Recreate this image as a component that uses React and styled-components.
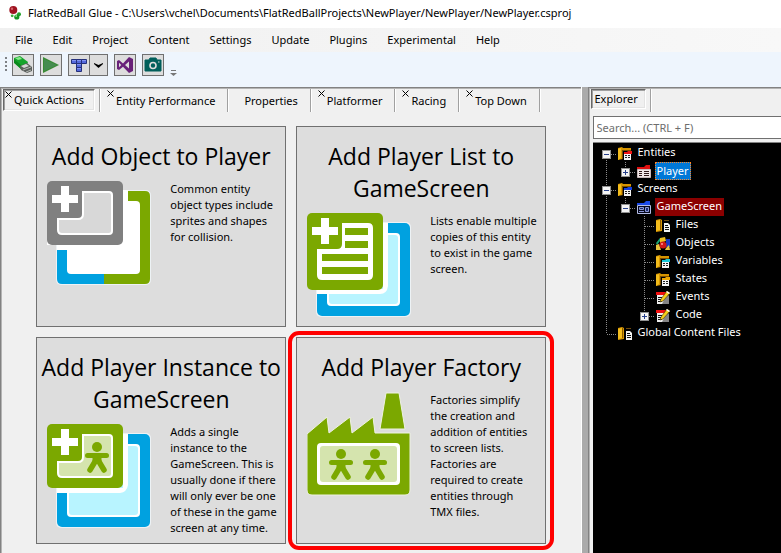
import React from "react";
import styled, { createGlobalStyle, css } from "styled-components";

const GlobalStyle = createGlobalStyle`
  * { box-sizing: border-box; }
  html, body, #root { height: 100%; }
  body {
    margin: 0;
    overflow: hidden;
    background: #f0f0f0;
    color: #000;
    font: 11px/16px "Noto Sans", "Open Sans", sans-serif;
  }
  button, input { font: inherit; color: inherit; }
`;

const Window = styled.div`
  display: flex;
  flex-direction: column;
  min-height: 100vh;
`;

const TitleBar = styled.header`
  display: flex;
  align-items: center;
  gap: 6px;
  height: 28px;
  padding: 0 8px 2px;
  background: #fff;
  white-space: nowrap;
`;

const WindowTitle = styled.h1`
  margin: 0;
  font-size: 11px;
  font-weight: 400;
`;

const MenuBar = styled.nav`
  display: flex;
  height: 24px;
  padding-left: 5px;
  background: linear-gradient(90deg, #f0f0f0, #f8f8f8);
`;

const MenuItem = styled.button`
  padding: 0 10px;
  border: 0;
  background: none;
`;

const ToolBar = styled.div`
  display: flex;
  align-items: flex-start;
  gap: 6px;
  height: 35px;
  padding: 2px 5px;
  background: #eef5fd;
`;

const Grip = styled.span`
  width: 2px;
  height: 14px;
  margin: 3px -1px 0 0;
  background: repeating-linear-gradient(#7d8085 0 2px, transparent 2px 4px);
`;

const ToolGroup = styled.div`
  display: flex;
`;

const ToolButton = styled.button`
  display: flex;
  align-items: center;
  justify-content: center;
  width: ${(p) => (p.$narrow ? 18 : 22)}px;
  height: 22px;
  padding: 0;
  border: 1px solid #707070;
  border-left-width: ${(p) => (p.$narrow ? 0 : 1)}px;
  background: #ddd;
`;

const Overflow = styled.button`
  height: 22px;
  padding: 0;
  border: 0;
  background: none;
  display: flex;
  align-items: flex-end;
`;

const Workspace = styled.div`
  flex: 1;
  display: grid;
  grid-template-columns: minmax(0, 3fr) 7px minmax(0, 1fr);
`;

const Panel = styled.section`
  display: flex;
  flex-direction: column;
  border-top: 1px solid #828282;
  border-left: 1px solid #828282;
  box-shadow: inset 1px 1px 0 #b4b4b4;
  padding: 1px 0 0 1px;
`;

const Splitter = styled.div`
  background: #ababab;
  border-left: 1px solid #fff;
`;

const TabStrip = styled.div`
  display: flex;
  height: 23px;
  padding-left: 1px;
`;

const Tab = styled.button`
  position: relative;
  padding: 0 12px 0 16px;
  border: 0;
  border-right: 1px solid #a0a0a0;
  box-shadow: 1px 0 0 #fff;
  background: none;
  white-space: nowrap;

  ${(p) =>
    p.$selected &&
    css`
      height: 22px;
      margin-right: 4px;
      padding: 0 10px 0 10px;
      border: 1px solid;
      border-color: #696969 #fff #fff #696969;
      box-shadow: inset 1px 1px 0 #a0a0a0, inset -1px -1px 0 #e3e3e3;
    `}
  ${(p) =>
    p.$compact &&
    css`
      height: 20px;
      padding: 0 7px 0 3px;
    `}
`;

const TabEdge = styled.span`
  width: 1px;
  background: #a0a0a0;
  box-shadow: 1px 0 0 #fff;
`;

const CloseMark = styled.svg`
  position: absolute;
  top: 1px;
  left: ${(p) => (p.$selected ? 1 : 7)}px;
`;

const Cards = styled.main`
  display: grid;
  grid-template-columns: repeat(auto-fill, 250px);
  justify-content: center;
  gap: 10px;
  padding: 14px 0 9px;
`;

const Card = styled.button`
  position: relative;
  display: flex;
  flex-direction: column;
  justify-content: flex-start;
  padding: 13px 4px 7px;
  border: 1px solid #707070;
  background: #ddd;
`;

const CardTitle = styled.span`
  display: block;
  align-self: stretch;
  font-family: "Open Sans", "Noto Sans", sans-serif;
  font-size: 23px;
  line-height: 32px;
  text-align: center;
`;

const CardBody = styled.span`
  display: flex;
  gap: 19px;
  padding: 9px 0 0 4px;
  text-align: left;
`;

const CardText = styled.span`
  flex: 1;
  white-space: pre-line;
`;

const CardIcon = styled.svg`
  flex: none;
  margin: 0 0 2px 2px;
`;

const Highlight = styled.span`
  position: absolute;
  inset: -7px -9px -7px -9px;
  border: 4px solid #f00;
  border-radius: 11px;
  pointer-events: none;
`;

const Search = styled.input`
  height: 23px;
  margin: 4px 0 3px 3px;
  padding: 0 3px;
  border: 1px solid #707070;
  border-right: 0;
  border-radius: 0;
  background: #fff;
  min-width: 0;
  &::placeholder { color: #6d6d6d; opacity: 1; }
`;

const Tree = styled.ul`
  flex: 1;
  list-style: none;
  margin: 0 0 0 3px;
  padding: 1px 0 0 4px;
  border-top: 1px solid #828282;
  background: #000;
  color: #fff;
`;

const TreeRow = styled.li`
  display: flex;
  align-items: center;
  height: 18px;
  white-space: nowrap;
`;

const vDots = "repeating-linear-gradient(#8a8a8a 0 1px, transparent 1px 2px)";
const hDots = "repeating-linear-gradient(90deg, #8a8a8a 0 1px, transparent 1px 2px)";
const guides = {
  blank: "none",
  line: `${vDots} 9px 0 / 1px 18px no-repeat`,
  tee: `${vDots} 9px 0 / 1px 18px no-repeat, ${hDots} 10px 10px / 9px 1px no-repeat`,
  end: `${vDots} 9px 0 / 1px 10px no-repeat, ${hDots} 10px 10px / 9px 1px no-repeat`,
  first: `${vDots} 9px 10px / 1px 8px no-repeat, ${hDots} 10px 10px / 9px 1px no-repeat`,
};

const Guide = styled.span`
  display: flex;
  align-items: center;
  justify-content: center;
  flex: none;
  width: 19px;
  height: 18px;
  padding-top: 2px;
  background: ${(p) => guides[p.$kind]};
`;

const Toggle = styled.button`
  display: flex;
  width: 9px;
  height: 9px;
  padding: 0;
  border: 1px solid #919191;
  background: #f4f4f4;
`;

const NodeIcon = styled.svg`
  flex: none;
  margin: 2px 3px 0 1px;
`;

const NodeLabel = styled.span`
  height: 18px;
  padding: 0 2px;
  border: 0 solid;
  ${(p) =>
    p.$tone === "selected" &&
    css`
      padding: 0 1px;
      line-height: 16px;
      border: 1px dotted #ff8728;
      background: #0078d7;
    `}
  ${(p) => p.$tone === "startup" && css`background: #8b0000;`}
`;

/* ---------- drawings ---------- */

const AppIcon = () => (
  <svg width="14" height="14" viewBox="0 0 14 14" aria-hidden="true">
    <circle cx="5.3" cy="4" r="4" fill="#9e1420" />
    <circle cx="4" cy="2.8" r="1.2" fill="#d4626a" />
    <circle cx="11" cy="8.2" r="2" fill="#22a22c" />
    <circle cx="4.2" cy="9.8" r="1.4" fill="#3aae3a" />
    <circle cx="8.8" cy="11" r="2.6" fill="#159422" />
    <circle cx="8.2" cy="10" r="0.9" fill="#8fe08a" />
  </svg>
);

const GlueIcon = () => (
  <svg width="20" height="20" viewBox="0 0 20 20" aria-hidden="true">
    <path d="M1 3 7 1 15 7 13 12 8 14 1 7Z" fill="#16a52c" />
    <path d="M2 3 7 2 9 4 5 5Z" fill="#8aec8c" />
    <path d="M1 4 8 10 8 14 1 8Z" fill="#0a8a1c" />
    <path d="M7 11 14 8 19 12 19 16 14 18 8 15Z" fill="#5c605d" />
    <path d="M8 11 13 9 16 11 11 13Z" fill="#d5d8d5" />
    <path d="M10 15 18 12M13 17 18 15" stroke="#b4b8b4" />
  </svg>
);

const PlayIcon = () => (
  <svg width="20" height="20" viewBox="0 0 20 20" aria-hidden="true">
    <path d="M2 2 18 10 2 18Z" fill="#388a34" />
    <path d="M3 4 16 10 3 16Z" fill="#458c50" />
  </svg>
);

const TileIcon = () => (
  <svg width="18" height="18" viewBox="0 0 18 18" aria-hidden="true">
    <g fill="#5468dc" stroke="#25307a">
      <path d="M1.500 3.500h5v4h-5zM6.500 3.500h5v4h-5zM11.500 3.500h5v4h-5zM6.500 7.500h5v4h-5zM6.500 11.500h5v4h-5z" />
    </g>
    <path d="M2 4.500h4M7 4.500h4M12 4.500h4M7 8.500h4M7 12.500h4" stroke="#8494f0" />
  </svg>
);

const ArrowIcon = () => (
  <svg width="9" height="5" viewBox="0 0 9 5" aria-hidden="true">
    <path d="M0 0 4.500 2 9 0V1L4.500 5 0 1Z" fill="#000" />
  </svg>
);

const VisualStudioIcon = () => (
  <svg width="18" height="18" viewBox="0 0 18 18" aria-hidden="true">
    <path
      fillRule="evenodd"
      fill="#68217a"
      d="M1 5 3 4 7 7.400 13 1 17 3V15L13 17 7 10.800 3 14 1 13ZM3 6.800V11.200L5.300 9ZM13 5.500 9 9 13 12.600Z"
    />
  </svg>
);

const CameraIcon = () => (
  <svg width="18" height="18" viewBox="0 0 18 18" aria-hidden="true">
    <path d="M1 4H5L6 2H12L13 4H17V15H1Z" fill="#005f5b" stroke="#005f5b" strokeLinejoin="round" />
    <circle cx="9" cy="9.500" r="3" fill="none" stroke="#ddd" strokeWidth="1.600" />
    <path d="M14 6h1.500" stroke="#ddd" />
  </svg>
);

const OverflowIcon = () => (
  <svg width="7" height="6" viewBox="0 0 7 6" aria-hidden="true">
    <path d="M1 .5H6" stroke="#777" />
    <path d="M0 3H7L3.500 6Z" fill="#777" />
  </svg>
);

const Person = ({ x, y }) => (
  <g transform={`translate(${x} ${y})`} stroke="#7ba800" strokeLinecap="round" fill="none">
    <circle cx="12" cy="5" r="5" fill="#7ba800" stroke="none" />
    <path d="M2.500 13.500H21.500" strokeWidth="5" />
    <path d="M12 12V19" strokeWidth="9" strokeLinecap="butt" />
    <path d="M11 18 5 28M13 18 19 28" strokeWidth="5.500" />
  </g>
);

const Plus = () => <path d="M14 5H22V14H31V22H22V31H14V22H5V14H14Z" fill="#fff" />;

const BackSheet = () => (
  <>
    <rect x="9" y="9" width="95" height="95" rx="5" fill="#edf2f5" />
    <rect x="10" y="10" width="93" height="93" rx="5" fill="#00a1e0" />
    <rect x="20" y="20" width="73" height="73" rx="4" fill="#fff" />
    <rect x="22" y="22" width="69" height="69" rx="3" fill="#b8f4ff" />
  </>
);

const iconArt = {
  object: (
    <>
      <rect x="9" y="9" width="95" height="95" rx="5" fill="#edf2f5" />
      <path d="M57 10H98Q103 10 103 15V98Q103 103 98 103H57Z" fill="#7ba800" />
      <path d="M57 103H15Q10 103 10 98V10H57Z" fill="#00a1e0" />
      <rect x="20" y="20" width="73" height="73" rx="4" fill="#fff" />
      <path d="M0 0H81V65H20V69H10V64H0Z" fill="#fff" />
      <path d="M0 0H81V9H0ZM0 64H9V70H0Z" fill="#ddd" />
      <rect width="76" height="64" rx="5" fill="#808080" />
      <path
        d="M36 11H62Q65 11 65 14V50Q65 53 62 53H15Q11 53 11 49V38H31Q36 38 36 33Z"
        fill="#d8d8d8"
        stroke="#fff"
        strokeWidth="2"
      />
      <Plus />
    </>
  ),
  list: (
    <>
      <BackSheet />
      <path d="M10 76H76V10H81V73Q80 81 73 81H10Z" fill="#fff" />
      <rect width="76" height="77" rx="5" fill="#7ba800" />
      <path d="M35 10H61Q66 10 66 15V62Q66 67 61 67H15Q10 67 10 62V36H30Q35 36 35 31Z" fill="#fff" />
      <path d="M38 15H61V22H38ZM38 28H61V35H38ZM15 41H61V48H15ZM15 54H61V61H15Z" fill="#7ba800" />
      <Plus />
    </>
  ),
  instance: (
    <>
      <BackSheet />
      <path d="M10 64H76V10H81V61Q80 68 73 69H10Z" fill="#fff" />
      <rect width="76" height="64" rx="5" fill="#7ba800" />
      <path
        d="M36 11H62Q65 11 65 14V50Q65 53 62 53H15Q11 53 11 49V38H31Q36 38 36 33Z"
        fill="#d5e4ae"
        stroke="#fff"
        strokeWidth="2"
      />
      <Person x={38} y={18} />
      <Plus />
    </>
  ),
  factory: (
    <>
      <path
        d="M0 42 20 25 22 41 43 25 45 41 66 25 68 41H103V98Q103 103 98 103H5Q0 103 0 98ZM79 1H92L98 37H73Z"
        fill="#7ba800"
        stroke="#eef2e2"
        strokeWidth="1"
      />
      <rect x="10" y="51" width="83" height="42" rx="4" fill="#fff" />
      <rect x="13" y="54" width="77" height="36" rx="3" fill="#d5e4ae" />
      <Person x={22} y={57} />
      <Person x={56} y={57} />
    </>
  ),
};

const Folder = () => (
  <>
    <path d="M1 2 5 1 6 2H14V5H6V13L1 14Z" fill="#d69400" />
    <path d="M1 3 4 2V12L1 14Z" fill="#f2bc1c" />
    <path d="M5.500 4V13M6 4.500H14" stroke="#7a4d00" />
  </>
);

const Sheet = ({ bar }) => (
  <>
    <path d="M6 5H15V15H6Z" fill="#000" />
    <path d="M7 6H10L11 5H15V8H7Z" fill={bar} />
    <path d="M7 8H14V14H7Z" fill="#f4f4f4" />
    <path d="M8 9.500h2M11 9.500h2M8 11.500h2M11 11.500h2" stroke="#222" />
  </>
);

const Form = ({ color, dark }) => (
  <>
    <path d="M1 3H8L10 1H14V5H1Z" fill={color} />
    <path d="M1.500 5.500H14.500V13.500H1.500Z" fill={dark ? "#05081c" : "#f2e8e8"} stroke={dark ? "#b4bce4" : "#c8b8b8"} />
    {dark ? (
      <path d="M3.500 7.500H7.500V9.500H3.500ZM9.500 7.500H12.500V11.500H9.500ZM3 11.500H8" fill="#1c2c70" stroke="#8c98d8" />
    ) : (
      <path d="M3 7.500h3M8 7.500h5M3 9.500h3M8 9.500h5M3 11.500h3M8 11.500h5" stroke="#301818" />
    )}
  </>
);

const Script = () => (
  <>
    <path d="M2 3H13L11 14H2Z" fill="#eee" />
    <path d="M10 8 14 5V14H7Z" fill="#858585" />
    <path d="M1 2H12V5H1Z" fill="#f01010" />
    <path d="M3 7.500h4M3 9.500h3M3 11.500h4" stroke="#111" />
    <path d="M12 1 15 3 8 11 5 12 6 9Z" fill="#f6cf18" stroke="#3b2c00" strokeWidth=".6" />
    <path d="M12 1 15 3 14 4 11 2Z" fill="#fff" />
  </>
);

const Docs = () => (
  <>
    <path d="M1 2 5 1 7 2V13L1 14Z" fill="#d69400" />
    <path d="M1 3 5 2V12L1 13Z" fill="#f2bc1c" />
    <path d="M5.500 2V12" stroke="#8a5800" />
    <path d="M9 5H13L15 7V14H9Z" fill="#f4f4f4" />
    <path d="M10 7.500h3M10 9.500h4M10 11.500h4" stroke="#111" />
    <path d="M9 2.500h5" stroke="#6e4a10" />
  </>
);

const nodeArt = {
  entities: <><Folder /><Sheet bar="#f01414" /></>,
  screens: <><Folder /><Sheet bar="#1440e0" /></>,
  variables: <><Folder /><Sheet bar="#18c8d8" /></>,
  states: <><Folder /><Sheet bar="#f0a800" /></>,
  entity: <Form color="#e01010" />,
  screen: <Form color="#1a4ae8" dark />,
  files: <Docs />,
  code: <Script />,
  objects: (
    <>
      <path d="M5 2 10 1 11 5 5 7Z" fill="#f0c020" />
      <path d="M1 7 5 2V5L2 9Z" fill="#18a878" />
      <path d="M11 3H15V11H11Z" fill="#1838c0" />
      <path d="M1 9 4 8 6 14H1ZM11 12 14 9 15 14H10Z" fill="#e8c43c" />
      <circle cx="8" cy="9" r="3.500" fill="#d01818" />
      <circle cx="7" cy="8" r="1" fill="#ff9a9a" />
    </>
  ),
};

/* ---------- data ---------- */

const menus = ["File", "Edit", "Project", "Content", "Settings", "Update", "Plugins", "Experimental", "Help"];

const tabs = [
  { label: "Quick Actions", selected: true, closable: true },
  { label: "Entity Performance", closable: true },
  { label: "Properties" },
  { label: "Platformer", closable: true },
  { label: "Racing", closable: true },
  { label: "Top Down", closable: true },
];

const actions = [
  {
    icon: "object",
    title: "Add Object to Player",
    text: "Common entity\nobject types include\nsprites and shapes\nfor collision.",
  },
  {
    icon: "list",
    title: "Add Player List to GameScreen",
    text: "Lists enable multiple\ncopies of this entity\nto exist in the game\nscreen.",
  },
  {
    icon: "instance",
    title: "Add Player Instance to GameScreen",
    text: "Adds a single\ninstance to the\nGameScreen. This is\nusually done if there\nwill only ever be one\nof these in the game\nscreen at any time.",
  },
  {
    icon: "factory",
    title: "Add Player Factory",
    text: "Factories simplify\nthe creation and\naddition of entities\nto screen lists.\nFactories are\nrequired to create\nentities through\nTMX files.",
    highlighted: true,
  },
];

const nodes = [
  { label: "Entities", icon: "entities", guides: ["first"], open: true },
  { label: "Player", icon: "entity", guides: ["line", "end"], open: false, tone: "selected" },
  { label: "Screens", icon: "screens", guides: ["tee"], open: true },
  { label: "GameScreen", icon: "screen", guides: ["line", "end"], open: true, tone: "startup" },
  { label: "Files", icon: "files", guides: ["line", "blank", "tee"] },
  { label: "Objects", icon: "objects", guides: ["line", "blank", "tee"] },
  { label: "Variables", icon: "variables", guides: ["line", "blank", "tee"] },
  { label: "States", icon: "states", guides: ["line", "blank", "tee"] },
  { label: "Events", icon: "code", guides: ["line", "blank", "tee"] },
  { label: "Code", icon: "code", guides: ["line", "blank", "end"], open: false },
  { label: "Global Content Files", icon: "files", guides: ["end"] },
];

function TreeNode({ node }) {
  const last = node.guides.length - 1;
  return (
    <TreeRow>
      {node.guides.map((kind, i) => (
        <Guide key={i} $kind={kind}>
          {i === last && node.open !== undefined && (
            <Toggle aria-label={`${node.open ? "Collapse" : "Expand"} ${node.label}`}>
              <svg width="7" height="7" viewBox="0 0 7 7" aria-hidden="true">
                <path d={node.open ? "M1 3.500H6" : "M1 3.500H6M3.500 1V6"} stroke="#27408b" />
              </svg>
            </Toggle>
          )}
        </Guide>
      ))}
      <NodeIcon width="16" height="16" viewBox="0 0 16 16" aria-hidden="true">
        {nodeArt[node.icon]}
      </NodeIcon>
      <NodeLabel $tone={node.tone}>{node.label}</NodeLabel>
    </TreeRow>
  );
}

export default function App() {
  return (
    <Window>
      <GlobalStyle />
      <TitleBar>
        <AppIcon />
        <WindowTitle>
          {"FlatRedBall Glue - C:\\Users\\vchel\\Documents\\FlatRedBallProjects\\NewPlayer/NewPlayer/NewPlayer.csproj"}
        </WindowTitle>
      </TitleBar>
      <MenuBar>
        {menus.map((m) => (
          <MenuItem key={m}>{m}</MenuItem>
        ))}
      </MenuBar>
      <ToolBar>
        <Grip />
        <ToolButton aria-label="Glue"><GlueIcon /></ToolButton>
        <ToolButton aria-label="Run"><PlayIcon /></ToolButton>
        <ToolGroup>
          <ToolButton aria-label="Tiled"><TileIcon /></ToolButton>
          <ToolButton $narrow aria-label="Tiled files"><ArrowIcon /></ToolButton>
        </ToolGroup>
        <ToolButton aria-label="Visual Studio"><VisualStudioIcon /></ToolButton>
        <ToolButton aria-label="Camera"><CameraIcon /></ToolButton>
        <Overflow aria-label="More tools"><OverflowIcon /></Overflow>
      </ToolBar>
      <Workspace>
        <Panel>
          <TabStrip role="tablist">
            {tabs.map((t) => (
              <React.Fragment key={t.label}>
                <Tab role="tab" aria-selected={!!t.selected} $selected={t.selected}>
                  {t.closable && (
                    <CloseMark $selected={t.selected} width="7" height="7" viewBox="0 0 7 7" aria-hidden="true">
                      <path d="M.5 .5 6.500 6.500M6.500 .5 .5 6.500" stroke="#000" />
                    </CloseMark>
                  )}
                  {t.label}
                </Tab>
                {t.selected && <TabEdge />}
              </React.Fragment>
            ))}
          </TabStrip>
          <Cards>
            {actions.map((a) => (
              <Card key={a.title}>
                <CardTitle>{a.title}</CardTitle>
                <CardBody>
                  <CardIcon width="104" height="104" viewBox="0 0 104 104" aria-hidden="true">
                    {iconArt[a.icon]}
                  </CardIcon>
                  <CardText>{a.text}</CardText>
                </CardBody>
                {a.highlighted && <Highlight />}
              </Card>
            ))}
          </Cards>
        </Panel>
        <Splitter />
        <Panel as="aside">
          <TabStrip role="tablist">
            <Tab role="tab" aria-selected="true" $selected $compact>Explorer</Tab>
            <TabEdge />
          </TabStrip>
          <Search type="text" aria-label="Search" placeholder="Search... (CTRL + F)" />
          <Tree>
            {nodes.map((n) => (
              <TreeNode key={n.label} node={n} />
            ))}
          </Tree>
        </Panel>
      </Workspace>
    </Window>
  );
}
